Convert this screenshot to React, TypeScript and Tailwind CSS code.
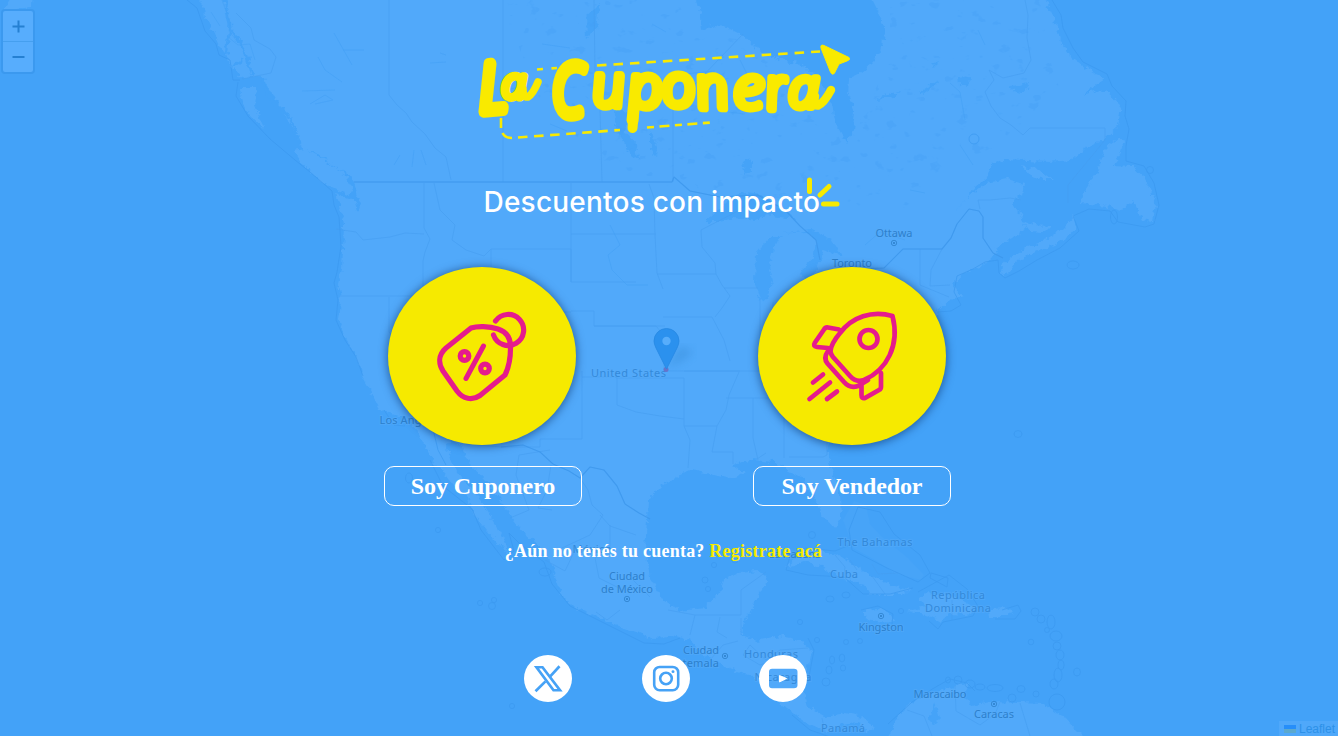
import React from "react";

const LAND =
  "M192 -6L204 6L205 18L212 30L220 48L228 58L234 72L246 78L264 77L268 88L277 104L287 119L296 135L303 149L318 154L334 166L346 173L354 183L358 196L361 204L358 212L354 200L336 193L341 212L344 225L343 250L342 268L338 284L341 300L339 320L344 336L352 350L360 362L362 376L370 390L379 408L392 414L405 417L417 431L426 448L434 463L444 473L452 484L468 498L474 515L486 530L500 546L508 554L505 541L493 520L479 498L464 480L453 464L447 448L451 440L462 446L470 464L485 480L502 502L512 517L526 535L543 550L552 565L557 583L561 594L575 608L600 618L625 628L655 639L672 635L690 640L703 655L717 663L735 670L752 676L768 690L779 704L794 714L809 724L828 733L842 724L858 722L866 732L875 728L862 717L846 713L825 717L808 706L803 690L808 665L811 650L800 640L780 636L757 641L742 635L744 620L754 605L763 588L768 575L757 571L738 573L724 579L718 595L704 608L680 611L664 600L650 578L645 550L647 520L648 500L662 485L680 475L692 470L714 475L734 480L744 473L732 464L750 460L775 462L788 470L803 478L814 498L824 517L835 529L841 520L840 492L830 466L827 445L836 425L870 400L925 350L937 312L950 300L962 296L953 284L963 273L984 266L992 257L998 246L1012 238L1026 228L1021 216L1012 204L1022 194L1024 184L1008 179L986 183L970 196L953 214L966 200L974 188L989 175L992 164L1002 160L1050 162L1070 160L1084 149L1103 140L1118 126L1121 105L1104 89L1082 95L1104 80L1087 68L1070 55L1060 40L1055 20L1043 -6Z";

const HUDSON =
  "M696 -6L701 16L702 30L714 25L727 27L743 35L754 47L765 53L781 60L798 63L814 73L824 90L832 103L836 124L846 142L853 130L855 111L848 96L849 78L860 73L873 62L882 47L884 30L880 14L870 -6Z";

const ISLANDS = [
  "M240 88L257 88L255 106L261 121L265 130L252 118L243 103Z",
  "M294 151L305 149L324 160L342 172L352 188L350 195L340 191L322 182L304 166Z",
  "M1120 137L1106 148L1098 170L1084 192L1080 203L1106 206L1122 210L1133 201L1142 220L1153 222L1156 204L1150 188L1144 177L1132 166L1115 165L1124 142Z",
  "M1002 274L1003 264L1020 251L1045 240L1062 229L1074 216L1076 230L1058 243L1038 251L1018 260L1010 272Z",
  "M1022 166L1038 169L1052 180L1042 180L1029 174Z",
  "M1022 220L1034 225L1050 226L1044 232L1030 231Z",
  "M786 567L800 554L818 550L838 554L856 567L875 577L895 586L912 590L902 595L870 595L864 584L843 579L828 570L806 561Z",
  "M863 612L876 608L890 613L894 621L881 623L868 620Z",
  "M908 611L926 607L919 598L925 593L945 594L963 600L977 609L967 615L949 614L940 622L927 614Z",
  "M989 609L1008 608L1013 613L1005 617L990 617Z",
  "M888 742L896 720L907 706L922 696L940 690L955 686L969 684L964 694L972 706L994 701L1020 702L1044 703L1052 710L1066 719L1075 729L1088 742Z",
  "M5 8L14 -6L32 -6L31 7L18 9L5 12Z",
];
const BAHAMAS = "M843 520L854 501L866 505L870 524L881 536L908 558L924 575L921 580L896 574L875 560L853 548Z";

const LAKES = [
  "M704 222L719 209L730 198L745 192L762 194L779 207L797 220L787 218L767 215L754 221L735 218L719 222Z",
  "M756 253L768 239L781 235L774 250L769 267L773 281L767 298L760 301L755 284Z",
  "M780 234L805 232L817 240L815 255L805 266L800 274L807 281L817 269L823 250L842 256L831 239L812 230Z",
  "M617 105L628 115L625 132L636 144L638 160L631 155L622 139L615 124Z",
  "M650 132L658 148L657 157L650 150Z",
  "M586 15L600 4L597 28L587 38Z",
  "M742 162L752 160L752 170L745 175Z",
  "M885 95L900 91L894 98L875 100Z",
  "M931 64L939 61L935 68Z",
  "M1010 86L1030 83L1021 94L1014 92Z",
  "M932 712L935 702L940 719L934 725L929 720Z",
  "M958 77L969 76L968 86L959 84Z",
  "M920 92L938 80L932 87L923 94Z",
];

const BORDERS = [
  "M354 182H672L674 177L690 191L720 197L758 195L785 210L800 226L816 240L820 260",
  "M389 0V95L397 105L406 113L412 122L425 134L435 148L446 157L451 180",
  "M503 0V182M594 0L595 70L600 110L602 182M673 182V107L743 34",
  "M424 183V228L430 239L425 252L423 261V296M434 183L440 210L455 225L452 240L466 250L484 256L491 249V311",
  "M336 229L356 232L363 240L390 237L405 233L424 234",
  "M340 296H491M389 297V332L440 390L442 410M491 249H571V282H636",
  "M571 183V282M571 234H656M649 184L654 198L655 235L657 273L663 289",
  "M571 311H594V326H665M519 282V312H571M594 326H656L661 332L664 350V371H770",
  "M657 274H716L722 285L730 296L722 308L715 317M663 317H712L724 340L730 361",
  "M616 371V378H684V426M582 371V439H540V447H501L466 444M582 377H617V405L636 412L660 416L684 419",
  "M684 426H717L726 410L729 395L739 372M684 371H740M726 398H784M753 398V438L758 460M784 398V458",
  "M717 426L712 452H733V464M684 426L690 440L688 468",
  "M757 195L740 210L701 230L702 247L715 263L716 274M760 300V340M724 288H758M773 302V350",
  "M855 269L884 268L903 249H942L951 238L957 224L969 209L979 211L983 217V238L993 253L1003 258",
  "M920 249V285L949 297M942 249L931 270L930 286L950 285M980 209L978 200L990 200L1010 198L1021 200",
  "M1068 203V185L1105 140V128H1030L1023 135L1011 125L1000 118L991 106L985 92L994 80L989 70L1003 78L1024 73L1031 60L1027 38L1028 15L1025 0",
  "M501 447L523 445L540 452L553 464L569 471L580 478L590 467L604 470L617 486L625 504L639 513L650 519",
  "M550 450L519 455L516 475L529 510L510 518M551 465L547 490L538 508L552 510M580 478L588 490L592 505L603 515M600 515L610 526L636 535M603 515L590 535L562 548M590 552L575 550L565 571L545 560M610 525V550L595 558L599 578L623 590M633 580L650 597M620 610L607 620L596 612M668 610L695 615L690 635M695 615H741V590M741 618V635M741 590L766 572M738 641L723 645L710 660M720 617L717 632L727 638",
  "M750 645L766 660L780 650L808 648M750 645L743 655L760 665L775 660M822 718L825 732",
  "M827 387V455L823 457H789M757 459L766 453M952 600V620",
  "M932 736L924 716L907 710M955 686L956 711L980 725L995 714L1000 702M1020 703L1030 736M872 564L878 574L898 573M835 555L845 567L844 578M850 560L857 570M872 576L885 594",
  "M236 13L251 28L254 40L270 49L276 57L271 73L242 79",
];

const RIVERS = [
  "M334 33L343 49L352 65M343 50L364 50M318 57L325 70L342 82M310 104L325 95L333 100L315 104M302 91L335 90M394 165L400 155M414 150L412 167M426 165L421 150M610 225L620 245L608 255L612 270L627 285L648 285",
  "M950 83L960 92L965 120M978 30L985 45M865 245L880 232L905 240M740 60L750 80M910 190L925 193M973 165L960 145",
  "M542 44L570 48M500 92L522 86M550 124L567 131M652 24L666 32M684 74L715 71M728 112L745 114M430 63L446 62M440 53L446 55",
  "M222 0L230 22L229 31L236 40M211 12L220 26M228 37L238 45L250 44L255 60",
];

const OUTER = [
  "M187 0L197 8L205 31L216 44L219 55L230 60L233 80L240 80M238 82L236 96L248 116L270 139L295 160L310 172L332 191L334 205L339 217L341 246L337 272L334 283L338 300L336 320L345 340L356 357L363 376M1052 0L1061 15L1063 28L1073 48L1083 62L1107 74L1112 86L1126 101L1125 116L1129 129L1126 146L1126 161L1144 166L1154 183L1159 205L1154 224L1145 227L1118 222L1110 211L1089 209L1073 216L1079 231L1060 248L1037 260L1019 271L1005 278L999 273L998 260L985 262L973 269L957 276L954 292L961 305L951 311L938 312",
  "M432 425L438 450L446 465M384 410L394 425L405 426M430 460L443 486L472 509L481 530L504 560L514 551L509 533L520 544L544 562L552 584L570 606L602 622L644 643L664 644L680 638M792 715L810 730L833 738M855 543L835 551L805 548L790 556L786 570L808 575L844 577L863 594L890 594L913 588M858 507L849 530L852 550L887 568L918 582L930 573L920 555L894 534L880 512Z",
  "M931 573L948 578L947 587L930 578ZM918 592L949 575L967 589L978 606L973 616L943 622L938 629L929 621M861 610L878 606L893 614L892 624",
  "M1002 610L1018 605L1021 611L1015 619H995M808 638L814 650L808 682M888 724L912 702L934 688L950 679L967 683L975 691",
];

const ISLETS: [number, number, number, number][] = [
  [438, 530, 2.6, 2.6], [480, 603, 2.6, 2.6], [494, 600, 2.6, 2.6], [492, 606, 3.5, 3.5],
  [512, 706, 2.6, 2.6], [545, 572, 6, 4], [409, 478, 3.5, 5], [714, 565, 2.6, 2.6],
  [705, 580, 3, 3], [708, 589, 2.6, 2.6], [735, 560, 3, 3], [830, 599, 4, 3],
  [846, 595, 4, 3], [800, 622, 2.6, 2.6], [817, 640, 2.6, 2.6], [846, 642, 2.5, 2.5],
  [860, 641, 2.5, 2.5], [832, 660, 2.6, 4], [842, 658, 2.8, 4], [829, 670, 3, 4],
  [843, 668, 2.6, 3], [826, 682, 4, 4], [901, 611, 2.6, 2.6], [1018, 434, 4, 3.5],
  [1150, 170, 3.5, 3.5], [1073, 265, 6, 4], [1031, 642, 2.8, 2.8], [1051, 622, 4, 7],
  [1056, 636, 6, 5], [1057, 646, 4, 4], [1060, 655, 4, 5], [1061, 665, 3, 5],
  [1058, 675, 4, 7], [1054, 684, 4, 5], [1077, 672, 3.5, 4], [1035, 612, 4, 4],
  [1041, 619, 4, 4], [1047, 630, 2.5, 2.5], [948, 680, 2.5, 3], [958, 680, 4, 4],
  [970, 684, 5, 4], [980, 687, 5, 3], [995, 688, 8, 3.5], [1021, 689, 4, 3.5],
  [1012, 698, 4, 4], [1036, 694, 3, 3], [1057, 702, 8, 8], [812, 535, 3.5, 3.5],
  [974, 139, 5, 5], [1114, 217, 3.5, 7],
];

const COUNTRY_LABELS: [string, number, number, number][] = [
  ["United States", 628.5, 377, 75], ["México", 592, 553, 39], ["The Bahamas", 875, 546, 75],
  ["Cuba", 844, 578, 28], ["República", 958, 599, 54], ["Dominicana", 958, 612, 66],
  ["Honduras", 771, 658, 54], ["Nicaragua", 783, 681, 57], ["Panamá", 843, 732, 44],
];
const CITY_LABELS: [string, number, number, number][] = [
  ["Ottawa", 894, 237, 37], ["Toronto", 852, 267, 40], ["Los Angeles", 411, 424, 63],
  ["Ciudad", 627, 580, 36], ["de México", 627, 593, 52], ["Ciudad", 701, 654, 36],
  ["Guatemala", 690, 667, 58], ["Kingston", 881, 631, 45], ["Maracaibo", 940, 698, 53],
  ["Caracas", 994, 718, 40], ["La Habana", 795, 558, 52],
];
const CAPITALS: [number, number][] = [
  [894, 243], [627, 599], [725, 656], [881, 616], [994, 704],
];

function MapBackdrop() {
  return (
    <svg className="absolute inset-0 h-full w-full" viewBox="0 0 1338 736" aria-hidden="true">
      <defs>
        <filter id="coast" x="-10" y="-10" width="1358" height="756" filterUnits="userSpaceOnUse" colorInterpolationFilters="sRGB">
          <feTurbulence type="fractalNoise" baseFrequency="0.16" numOctaves="3" seed="7" />
          <feDisplacementMap in="SourceGraphic" scale="8" xChannelSelector="R" yChannelSelector="G" />
        </filter>
        <filter id="speckle" x="0" y="0" width="1338" height="736" filterUnits="userSpaceOnUse" colorInterpolationFilters="sRGB">
          <feTurbulence type="fractalNoise" baseFrequency="0.07 0.11" numOctaves="3" seed="12" />
          <feColorMatrix values="0 0 0 0 0.26 0 0 0 0 0.62 0 0 0 0 0.96 14 0 0 0 -9.3" />
          <feComposite in2="SourceGraphic" operator="in" />
        </filter>
        <filter id="soft"><feGaussianBlur stdDeviation="4" /></filter>
      </defs>
      <g filter="url(#coast)" fill="#51a9fa">
        <path d={LAND} />
        {ISLANDS.map((d) => <path key={d} d={d} />)}
        <path d={HUDSON} fill="#43a2f8" />
        {LAKES.map((d) => <path key={d} d={d} fill="#45a3f8" />)}
        <path d="M224 -6L230 26L226 55M233 66L242 60M262 78L268 96L290 118L300 143M231 30L245 50L252 76" fill="none" stroke="#43a2f8" strokeWidth="3" />
      </g>
      <path d={BAHAMAS} fill="#47a4f8" />
      <path filter="url(#speckle)" opacity=".3" d="M500 0H694V34L745 40L826 110L845 150L890 60V0H1040L1050 60L1060 90L990 150L900 210L690 195L600 160L540 100Z" />
      <g fill="none" strokeLinejoin="round">
        <g stroke="#459df0" strokeWidth=".8" opacity=".75">{BORDERS.map((d) => <path key={d} d={d} />)}</g>
        <g stroke="#3994ea" strokeWidth="1.2" opacity=".55">
          <path d={BORDERS[0]} />
          <path d={BORDERS[13]} />
          <path d={BORDERS[16]} />
        </g>
        <g stroke="#43a0f5" strokeWidth=".8" opacity=".7">{RIVERS.map((d) => <path key={d} d={d} />)}</g>
        <g stroke="#3b98ef" strokeWidth=".9" opacity=".8">
          {OUTER.map((d) => <path key={d} d={d} />)}
          {ISLETS.map(([x, y, rx, ry]) => <ellipse key={`${x}-${y}`} cx={x} cy={y} rx={rx} ry={ry} />)}
        </g>
      </g>
      <g fontFamily="'Noto Sans', sans-serif" textAnchor="middle" stroke="#58acf8" strokeOpacity=".45" strokeWidth="2" paintOrder="stroke">
        <g fill="#3389d9" fontSize="11">
          {COUNTRY_LABELS.map(([t, x, y, w]) => <text key={t} x={x} y={y} textLength={w}>{t}</text>)}
        </g>
        <g fill="#2d80cc" fontSize="11">
          {CITY_LABELS.map(([t, x, y, w]) => <text key={t + x} x={x} y={y} textLength={w}>{t}</text>)}
        </g>
      </g>
      {CAPITALS.map(([x, y]) => (
        <g key={x}>
          <circle cx={x} cy={y} r="2.7" fill="none" stroke="#2d80cc" strokeWidth=".8" />
          <circle cx={x} cy={y} r="1.1" fill="#2d80cc" />
        </g>
      ))}
      <path d="M667 368L680 346L694 352L680 362Z" fill="#287bc3" opacity=".3" filter="url(#soft)" />
      <circle cx="666" cy="369.5" r="2.5" fill="#6674cb" />
      <path d="M666.5 369L656 348Q654 344 654 341A12.5 12.5 0 0 1 679 341Q679 344 677 348Z" fill="#2b91ee" stroke="#2688e2" strokeWidth=".8" />
      <circle cx="666.5" cy="341" r="4.2" fill="#57adfb" />
    </svg>
  );
}

const LETTERS: { ch: string; size: number; transform: string; stroke: number }[] = [
  { ch: "L", size: 66, transform: "translate(1 68) rotate(-5) skewX(-1) scale(.84 1)", stroke: 12 },
  { ch: "a", size: 42, transform: "translate(22 53.5) skewX(2) scale(1.05 1)", stroke: 7 },
  { ch: "C", size: 70, transform: "translate(73.5 70.5) skewX(3) scale(.76 1)", stroke: 12 },
  { ch: "u", size: 58, transform: "translate(114.5 62) skewX(7) scale(.98 1)", stroke: 8.5 },
  { ch: "p", size: 58, transform: "translate(150.5 62.5) skewX(7) scale(1.03 1)", stroke: 8.5 },
  { ch: "o", size: 58, transform: "translate(184 62) skewX(7) scale(1 1)", stroke: 8.5 },
  { ch: "n", size: 58, transform: "translate(220 63.5) skewX(13) scale(.97 1)", stroke: 8.5 },
  { ch: "e", size: 58, transform: "translate(254.5 64) skewX(4) scale(1.08 1)", stroke: 8 },
  { ch: "r", size: 58, transform: "translate(288.500 64.5) skewX(9) scale(.93 1)", stroke: 8.5 },
  { ch: "a", size: 54, transform: "translate(309 62.5) skewX(1) scale(1 1)", stroke: 8 },
];

function Logo() {
  return (
    <svg className="mr-[3px] h-[96px] w-[372px] shrink-0 overflow-visible" viewBox="0 0 372 96" role="img" aria-label="La Cuponera">
      <g fill="#f9ea00" stroke="#f9ea00" strokeLinejoin="round" strokeLinecap="round" fontFamily="'Open Sans', sans-serif" fontStyle="italic" fontWeight="300">
        {LETTERS.map((l, i) => (
          <text key={i} fontSize={l.size} transform={l.transform} strokeWidth={l.stroke}>{l.ch}</text>
        ))}
        <path d="M43 45Q43 54 48 53Q53 50 58 38" fill="none" strokeWidth="7.5" />
        <path d="M335 52Q333 62 338 61.500Q344 59 351 46" fill="none" strokeWidth="8.5" />
        <path d="M154 66L152.500 84" fill="none" strokeWidth="10" />
        <path d="M341 4Q340 0 344 1.500L369 13.500Q371 15.500 367 17L359 20L354.500 29Q352.500 32 350.500 28Z" strokeWidth="1" />
      </g>
      <g fill="none" stroke="#f9ea00" strokeWidth="2.6">
        <path d="M57 25.500L77 24" strokeDasharray="6 8.500" />
        <path d="M117 21.500L340 7.500" strokeDasharray="9.500 7" />
        <path d="M21 74V84M22.500 89Q25 94 32 94" />
        <path d="M38 93.500L140 86" strokeDasharray="9.500 6.600" />
        <path d="M167 83.500L231 78.500" strokeDasharray="7 5.500 10 5.500" />
      </g>
    </svg>
  );
}

function TagIcon() {
  return (
    <svg className="h-[90px] w-[90px] overflow-visible" viewBox="0 0 90 90" fill="none" stroke="#e51b8d" strokeWidth="5.200" strokeLinecap="round" strokeLinejoin="round">
      <path d="M34 17C40 15 52 15 61 18C70 21 74 27 73.500 37C73.500 48 72 56 68 64L43 84.500C35 90 26 88 20 80L6 60C1.500 53 1 44 9 37Z" />
      <path d="M58.500 10A15.500 15.500 0 1 1 56.500 24" />
      <path d="M46.500 35L29 67.500" strokeWidth="5" />
      <circle cx="27.500" cy="45" r="4.300" />
      <circle cx="48" cy="57.500" r="4.300" />
    </svg>
  );
}

function RocketIcon() {
  return (
    <svg className="h-[90px] w-[90px] overflow-visible" viewBox="0 0 90 90" fill="none" stroke="#e51b8d" strokeWidth="4.700" strokeLinecap="round" strokeLinejoin="round">
      <path d="M85.500 5C65-1 45 6 33 22C28 28 24 34 23.500 40Q23.500 43 26 46L43 65Q49 72 57 69C80 59 93 34 85.500 5Z" />
      <circle cx="61.500" cy="28" r="9" />
      <path d="M32 18.500L21 16.500Q18.500 16 17 18.500L8 31.500Q5.500 35.500 10 36L21 37" />
      <path d="M21 40Q16 47 20.500 52.500L37 71Q43 78 51 75L61 69M74 62V76Q74 78 72 79L58 87Q54.500 88 54.500 84V74" />
      <path d="M16 63.500L6 71.500M23 71.500L2.500 88M30 80.500L20 88" />
    </svg>
  );
}

function Role({ label, nudge, children }: { label: string; nudge: string; children: React.ReactNode }) {
  return (
    <div className="flex w-[198px] flex-col items-center">
      <div className={nudge}>
        <div className="flex h-[178px] w-[188px] items-center justify-center rounded-[50%] bg-[#f6ea00] shadow-[0_1px_9px_1px_rgba(0,30,80,0.5)]">
          {children}
        </div>
      </div>
      <button className="mt-[21px] h-[40px] w-full rounded-[10px] border border-white font-['Liberation_Serif',serif] text-[24px] leading-[38px] font-bold tracking-[-0.1px] text-white">
        {label}
      </button>
    </div>
  );
}

function SocialIcons() {
  return (
    <div className="mt-[91px] mr-[4px] flex w-[283px] justify-between">
      <svg className="h-[47px] w-[48px]" viewBox="0 0 48 48" preserveAspectRatio="none">
        <circle cx="24" cy="24" r="24" fill="#fff" />
        <g fill="none" stroke="#46a2f6" strokeWidth="2.700">
          <path d="M12.500 12.500H18.500L36 36H29.500Z" />
          <path d="M35.500 11.500L26 22M21.500 27L11.500 37" />
        </g>
      </svg>
      <svg className="h-[47px] w-[48px]" viewBox="0 0 48 48" preserveAspectRatio="none">
        <circle cx="24" cy="24" r="24" fill="#fff" />
        <g fill="none" stroke="#46a2f6" strokeWidth="2.600">
          <rect x="12.200" y="12.200" width="24" height="23.700" rx="5.500" />
          <circle cx="24" cy="24" r="5.800" />
        </g>
        <circle cx="31" cy="17" r="1.500" fill="#46a2f6" />
      </svg>
      <svg className="h-[47px] w-[48px]" viewBox="0 0 48 48" preserveAspectRatio="none" fill="#fff">
        <path fillRule="evenodd" d="M24 0A24 24 0 1 0 24 48A24 24 0 1 0 24 0ZM13 14Q10 14 10 17V31Q10 34 13 34H35Q38.500 34 38.500 31V17Q38.500 14 35 14Z" />
        <path d="M20.500 21L27.500 24L20.500 27.500Z" strokeLinejoin="round" stroke="#fff" />
      </svg>
    </div>
  );
}

export default function App() {
  return (
    <main className="relative flex h-[736px] w-full flex-col items-center overflow-hidden bg-[#43a2f8] pr-[3px]">
      <MapBackdrop />
      <div className="absolute top-[9px] left-[1px] flex w-[34px] flex-col rounded-[4px] border-2 border-[#3b99ef] bg-[#57adfd]">
        <button className="flex h-[31px] items-center justify-center border-b border-[#459fef]" aria-label="Zoom in">
          <svg width="13" height="13" viewBox="0 0 13 13" stroke="#2580d2" strokeWidth="2"><path d="M6.500 .5V12.500M.5 6.500H12.500" /></svg>
        </button>
        <button className="flex h-[30px] items-center justify-center" aria-label="Zoom out">
          <svg width="13" height="13" viewBox="0 0 13 13" stroke="#2580d2" strokeWidth="2"><path d="M.5 6H12.500" /></svg>
        </button>
      </div>
      <div className="absolute right-0 bottom-0 flex h-[15px] items-center gap-[3px] bg-[#4fa8fa] pr-[3px] pl-[5px] font-['Liberation_Sans',sans-serif] text-[12px] text-[#2d91e8]">
        <svg width="12" height="8" viewBox="0 0 12 8"><path d="M0 0H12V4H0Z" fill="#268ef9" /><path d="M0 4H12V8H0Z" fill="#5ba9cf" /></svg>
        Leaflet
      </div>

      <section className="relative flex w-[567px] flex-col items-center pt-[44px]">
        <Logo />
        <div className="mt-[36px] mr-[10px] flex h-[44px] w-[358px] items-end">
          <h1 className="w-[338px] shrink-0 font-['Inter',sans-serif] text-[28px] leading-[36px] font-medium tracking-[0.22px] whitespace-nowrap text-white">Descuentos con impacto</h1>
          <svg className="-ml-[16px] h-[33px] w-[34px] shrink-0 self-start" viewBox="0 0 34 33" stroke="#f6ea00" strokeWidth="5" strokeLinecap="round">
            <path d="M3.500 4V15.500M14 19L23 10.500M17.500 28H31" />
          </svg>
        </div>
        <div className="mt-[47px] flex w-full justify-between">
          <Role label="Soy Cuponero" nudge="pr-[3px]"><TagIcon /></Role>
          <Role label="Soy Vendedor" nudge="pr-[1px]"><RocketIcon /></Role>
        </div>
        <p className="mt-[32px] mr-[8px] font-['Liberation_Serif',serif] text-[18px] leading-[26px] font-bold tracking-[0.24px] whitespace-nowrap text-white">
          ¿Aún no tenés tu cuenta? <a className="text-[#f6ea00]" href="#registro">Registrate acá</a>
        </p>
        <SocialIcons />
      </section>
    </main>
  );
}
